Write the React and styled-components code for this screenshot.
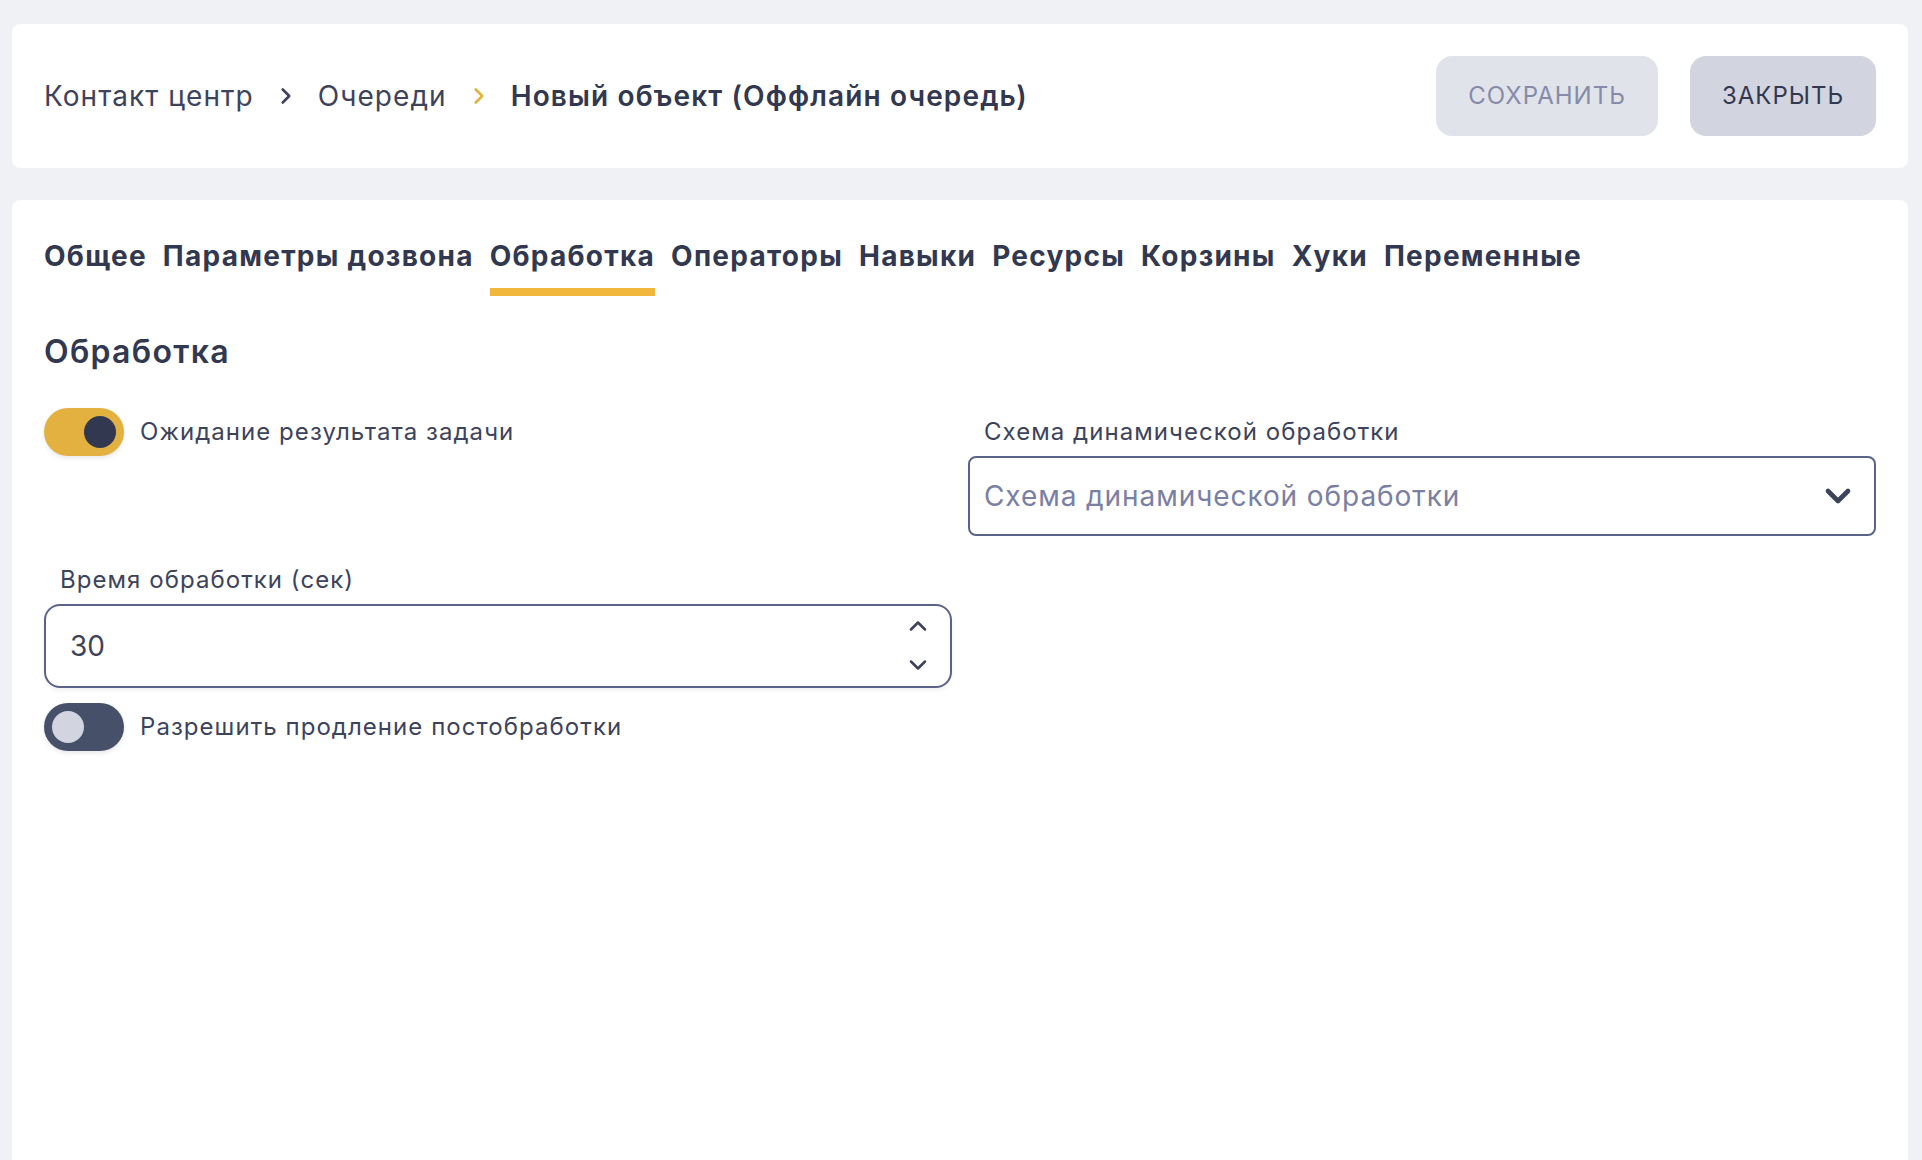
import React from 'react';
import styled, { createGlobalStyle } from 'styled-components';
import { ChevronRight, ChevronDown, ChevronUp } from 'lucide-react';

const GlobalStyle = createGlobalStyle`
  html, body {
    margin: 0;
    height: 100%;
    background-color: #eff1f5;
    overflow: hidden;
  }
  * {
    box-sizing: border-box;
  }
  body {
    font-family: Inter, "Noto Sans", "Liberation Sans", sans-serif;
    color: #32384f;
  }
`;

const Page = styled.div`
  display: flex;
  flex-direction: column;
  gap: 32px;
  height: 1160px;
  padding: 24px 14px 0 12px;
`;

const Header = styled.header`
  display: flex;
  align-items: center;
  justify-content: space-between;
  height: 144px;
  padding: 0 32px;
  background-color: #fff;
  border-radius: 8px;
`;

const Crumbs = styled.nav`
  display: flex;
  align-items: center;
  gap: 19px;
  font-size: 28px;
`;

const Crumb = styled.span`
  color: #3d435b;
  font-weight: 400;
  letter-spacing: 1.05px;
`;

const CurrentCrumb = styled.span`
  color: #32384f;
  font-weight: 600;
  letter-spacing: 1.13px;
`;

const Actions = styled.div`
  display: flex;
  gap: 32px;
`;

const Button = styled.button`
  height: 80px;
  width: ${(p) => p.$width}px;
  padding: 0 0 2px;
  border: none;
  border-radius: 16px;
  background-color: ${(p) => (p.disabled ? '#e0e3ea' : '#d2d5e0')};
  color: ${(p) => (p.disabled ? '#858ba9' : '#32384f')};
  font-family: inherit;
  font-size: 24px;
  letter-spacing: 1px;
  text-transform: uppercase;
`;

const Card = styled.main`
  flex: 1;
  padding: 32px 32px 0;
  background-color: #fff;
  border-radius: 8px 8px 0 0;
`;

const Tabs = styled.div`
  display: flex;
  gap: 16px;
`;

const Tab = styled.div`
  height: 64px;
  padding-top: 4px;
  font-size: 28px;
  font-weight: 700;
  letter-spacing: 1.25px;
  line-height: 40px;
  color: #32384f;
  border-bottom: 8px solid ${(p) => (p.$active ? '#f0b73c' : 'transparent')};
`;

const SectionTitle = styled.h2`
  margin: 36px 0 36px;
  font-size: 32px;
  font-weight: 600;
  letter-spacing: 1.3px;
  line-height: 40px;
  color: #32384f;
`;

const FormGrid = styled.div`
  display: grid;
  grid-template-columns: 1fr 1fr;
  column-gap: 16px;
  row-gap: 20px;
`;

const ToggleRow = styled.label`
  display: flex;
  align-items: center;
  align-self: start;
  gap: 16px;
  height: 48px;
  font-size: 24px;
  letter-spacing: 1.05px;
  color: #3d435b;
`;

const ToggleText = styled.span`
  margin-top: -2px;
`;

const ToggleTrack = styled.span`
  display: flex;
  align-items: center;
  justify-content: ${(p) => (p.$on ? 'flex-end' : 'flex-start')};
  width: 80px;
  height: 48px;
  padding: 0 8px;
  border-radius: 24px;
  background-color: ${(p) => (p.$on ? '#e2b13f' : '#475069')};
  box-shadow: 0 2px 4px rgba(50, 56, 79, 0.12);
`;

const ToggleKnob = styled.span`
  width: 32px;
  height: 32px;
  border-radius: 50%;
  background-color: ${(p) => (p.$on ? '#32384f' : '#d2d5e0')};
`;

const Field = styled.div`
  display: flex;
  flex-direction: column;
  grid-column: ${(p) => p.$column || 'auto'};
`;

const FieldLabel = styled.label`
  height: 48px;
  padding: 4px 16px 0;
  font-size: 24px;
  letter-spacing: 1.05px;
  line-height: 40px;
  color: #3d435b;
`;

const SelectBox = styled.div`
  display: flex;
  align-items: center;
  justify-content: space-between;
  height: 80px;
  padding: 0 16px 0 14px;
  border: 2px solid #5a6488;
  border-radius: 8px;
  font-size: 28px;
  letter-spacing: 0.92px;
  color: #7a80a4;
`;

const NumberBox = styled.div`
  position: relative;
  height: 84px;
  border: 2px solid #5a6488;
  border-radius: 16px;
  box-shadow: 0 2px 4px rgba(50, 56, 79, 0.08);
`;

const NumberInput = styled.input`
  width: 100%;
  height: 100%;
  padding: 0 24px;
  border: none;
  outline: none;
  background: transparent;
  border-radius: 16px;
  font-family: inherit;
  font-size: 28px;
  color: #3d435b;
`;

const Spinner = styled.div`
  position: absolute;
  top: 6px;
  right: 18px;
  display: flex;
  flex-direction: column;
  gap: 11px;
  color: #3d435b;
  svg {
    display: block;
  }
`;

const SecondToggle = styled(ToggleRow)`
  grid-column: 1 / -1;
  margin-top: -5px;
`;

const App = () => (
  <>
    <GlobalStyle />
    <Page>
      <Header>
        <Crumbs>
          <Crumb>Контакт центр</Crumb>
          <ChevronRight size={26} strokeWidth={2.4} color="#3d435b" />
          <Crumb>Очереди</Crumb>
          <ChevronRight size={26} strokeWidth={2.4} color="#e2b13f" />
          <CurrentCrumb>Новый объект (Оффлайн очередь)</CurrentCrumb>
        </Crumbs>
        <Actions>
          <Button disabled $width={222}>Сохранить</Button>
          <Button $width={186}>Закрыть</Button>
        </Actions>
      </Header>
      <Card>
        <Tabs>
          <Tab>Общее</Tab>
          <Tab>Параметры дозвона</Tab>
          <Tab $active>Обработка</Tab>
          <Tab>Операторы</Tab>
          <Tab>Навыки</Tab>
          <Tab>Ресурсы</Tab>
          <Tab>Корзины</Tab>
          <Tab>Хуки</Tab>
          <Tab>Переменные</Tab>
        </Tabs>
        <SectionTitle>Обработка</SectionTitle>
        <FormGrid>
          <ToggleRow>
            <ToggleTrack $on><ToggleKnob $on /></ToggleTrack>
            <ToggleText>Ожидание результата задачи</ToggleText>
          </ToggleRow>
          <Field>
            <FieldLabel>Схема динамической обработки</FieldLabel>
            <SelectBox>
              Схема динамической обработки
              <ChevronDown size={40} strokeWidth={2.8} color="#3d435b" />
            </SelectBox>
          </Field>
          <Field $column="1">
            <FieldLabel>Время обработки (сек)</FieldLabel>
            <NumberBox>
              <NumberInput defaultValue="30" />
              <Spinner>
                <ChevronUp size={28} strokeWidth={2.2} />
                <ChevronDown size={28} strokeWidth={2.2} />
              </Spinner>
            </NumberBox>
          </Field>
          <SecondToggle>
            <ToggleTrack><ToggleKnob /></ToggleTrack>
            <ToggleText>Разрешить продление постобработки</ToggleText>
          </SecondToggle>
        </FormGrid>
      </Card>
    </Page>
  </>
);

export default App;
